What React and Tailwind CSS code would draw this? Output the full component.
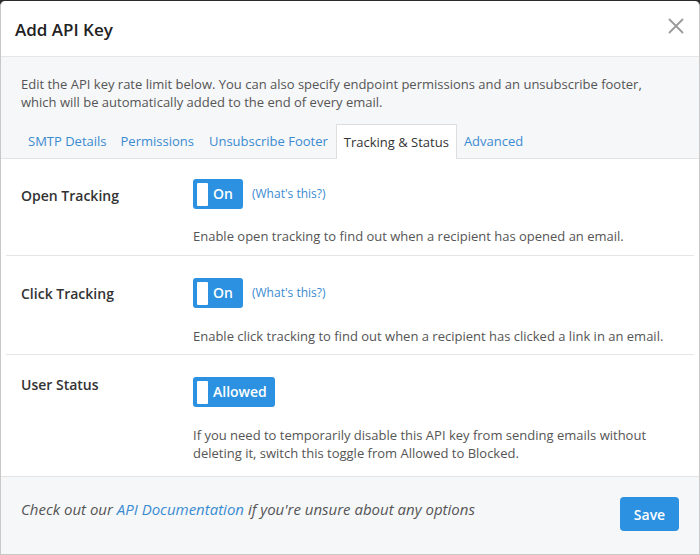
export default function App() {
  const font = { fontFamily: '"Open Sans", "Noto Sans", sans-serif' };
  const Toggle = ({ label, wide }) => (
    <div className={`flex items-center h-[30px] rounded-[3px] bg-[#2b91e0] pl-[4px] shrink-0 ${wide ? "w-[82px]" : "w-[50px]"}`}>
      <div className="w-[11px] h-[23px] bg-white rounded-[1px]" />
      <span className="ml-[5px] text-white text-[14px] font-semibold leading-none">{label}</span>
    </div>
  );
  return (
    <div className="w-[700px] h-[555px] bg-[#2b2b2b] pt-[1px]" style={font}>
      <div className="h-[554px] bg-white rounded-t-[5px] border-x border-b border-[#c8c8c8] flex flex-col overflow-hidden">
        {/* header */}
        <div className="h-[56px] flex items-center justify-between pl-[14px] pr-[15px] border-b border-[#e6e6e6]">
          <h1 className="text-[17px] font-semibold text-[#222] leading-none mt-[1px]">Add API Key</h1>
          <svg width="16" height="16" viewBox="0 0 16 16" className="mt-[-6px]">
            <path d="M1.5 1.5 L14.5 14.5 M14.5 1.5 L1.5 14.5" stroke="#9a9a9a" strokeWidth="1.8" strokeLinecap="round" />
          </svg>
        </div>
        {/* info + tabs */}
        <div className="bg-[#f6f7f9] border-b border-[#e3e3e3]">
          <p className="pt-[18px] px-[20px] text-[13px] leading-[18px] text-[#555]">
            Edit the API key rate limit below. You can also specify endpoint permissions and an unsubscribe footer, which will be automatically added to the end of every email.
          </p>
          <div className="flex mt-[13px] pl-[20px] text-[13px] leading-[18px]">
            <div className="px-[7px] pt-[8px] pb-[7px] text-[#3a8bd0]">SMTP Details</div>
            <div className="px-[7px] pt-[8px] pb-[7px] text-[#3a8bd0]">Permissions</div>
            <div className="px-[8px] pt-[8px] pb-[7px] text-[#3a8bd0]">Unsubscribe Footer</div>
            <div className="px-[7px] pt-[8px] pb-[8px] -mb-[1px] bg-white border-x border-t border-[#dedede] text-[#333]">Tracking &amp; Status</div>
            <div className="px-[7px] pt-[8px] pb-[7px] text-[#3a8bd0]">Advanced</div>
          </div>
        </div>
        {/* rows */}
        <div className="flex-1 mx-[5px]">
          <div className="flex pl-[15px] pr-[20px] pt-[20px] pb-[10px] border-b border-[#e6e6e6]">
            <div className="w-[172px] shrink-0 pt-[7px] text-[14px] font-semibold text-[#333] leading-[20px]">Open Tracking</div>
            <div className="flex-1">
              <div className="flex items-center">
                <Toggle label="On" />
                <span className="ml-[9px] text-[12px] text-[#3a8bd0]">(What's this?)</span>
              </div>
              <p className="mt-[18px] text-[13px] leading-[18px] text-[#555]">Enable open tracking to find out when a recipient has opened an email.</p>
            </div>
          </div>
          <div className="flex pl-[15px] pr-[20px] pt-[22px] pb-[9px] border-b border-[#e6e6e6]">
            <div className="w-[172px] shrink-0 pt-[6px] text-[14px] font-semibold text-[#333] leading-[20px]">Click Tracking</div>
            <div className="flex-1">
              <div className="flex items-center">
                <Toggle label="On" />
                <span className="ml-[9px] text-[12px] text-[#3a8bd0]">(What's this?)</span>
              </div>
              <p className="mt-[19px] text-[13px] leading-[18px] text-[#555]">Enable click tracking to find out when a recipient has clicked a link in an email.</p>
            </div>
          </div>
          <div className="flex pl-[15px] pr-[20px] pt-[22px]">
            <div className="w-[172px] shrink-0 -mt-[2px] text-[14px] font-semibold text-[#333] leading-[20px]">User Status</div>
            <div className="flex-1">
              <Toggle label="Allowed" wide />
              <p className="mt-[19px] text-[13px] leading-[18px] text-[#555]">If you need to temporarily disable this API key from sending emails without deleting it, switch this toggle from Allowed to Blocked.</p>
            </div>
          </div>
        </div>
        {/* footer */}
        <div className="h-[78px] bg-[#f6f7f9] border-t border-[#e3e3e3] flex items-start justify-between pl-[20px] pr-[20px] pt-[20px]">
          <p className="italic text-[15px] leading-[20px] text-[#555] mt-[2px]">
            Check out our <span className="text-[#3a8bd0]">API Documentation</span> if you're unsure about any options
          </p>
          <button className="w-[59px] h-[34px] rounded-[4px] bg-[#2b91e0] text-white text-[14px] font-semibold">Save</button>
        </div>
      </div>
    </div>
  );
}
